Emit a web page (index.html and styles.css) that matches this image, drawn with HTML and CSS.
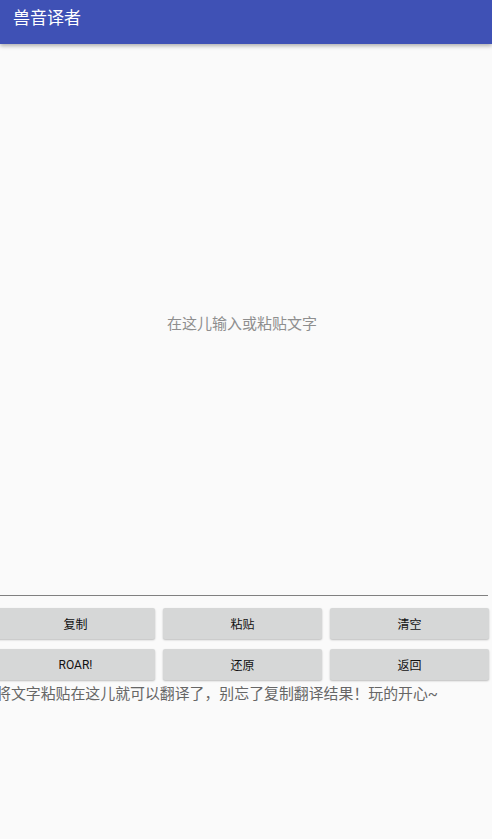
FILE: index.html
```html
<!DOCTYPE html>
<html lang="zh-CN">
<head>
  <meta charset="UTF-8">
  <meta name="viewport" content="width=device-width, initial-scale=1.0">
  <title>兽音译者</title>
  <link rel="stylesheet" href="styles.css">
</head>
<body>
    <div class="toolbar">兽音译者</div>
    <div class="main">
        <div class="inputBox">
            <span class="hint">在这儿输入或粘贴文字</span>
        </div>
        <div class="buttons">
            <div class="btn">复制</div>
            <div class="btn">粘贴</div>
            <div class="btn">清空</div>
            <div class="btn">ROAR!</div>
            <div class="btn">还原</div>
            <div class="btn">返回</div>
        </div>
        <div class="tip">将文字粘贴在这儿就可以翻译了，别忘了复制翻译结果！玩的开心~</div>
    </div>
</body>
</html>
```

FILE: styles.css
```css
body {
    font-family: Roboto, "Noto Sans CJK SC", sans-serif;
    margin: 0;
    background: #fafafa;
    width: 492px;
    height: 839px;
    overflow: hidden;
}
.toolbar {
    height: 44px;
    background: #3f51b5;
    color: #fff;
    font-size: 17px;
    line-height: 37px;
    padding-left: 13px;
    box-shadow: 0 2px 4px rgba(0, 0, 0, 0.3);
    position: relative;
    z-index: 2;
}
.main {
    margin-left: -4px;
    width: 492px;
}
.inputBox {
    height: 550px;
    border-bottom: 1px solid #808080;
    display: flex;
    align-items: center;
    justify-content: center;
    margin-left: 4px;
    padding-top: 1px;
}
.hint {
    color: #8e8e8e;
    font-size: 15px;
    margin-left: -4px;
    margin-top: 4px;
}
.buttons {
    display: grid;
    grid-template-columns: 159px 159px 159px;
    column-gap: 8px;
    row-gap: 10px;
    padding-top: 12px;
}
.btn {
    height: 31px;
    background: #d6d7d7;
    border-radius: 2px;
    box-shadow: 0 1px 2px rgba(0, 0, 0, 0.25);
    font-size: 12px;
    color: #111;
    display: flex;
    align-items: center;
    justify-content: center;
}
.tip {
    color: #666;
    font-size: 14.9px;
    line-height: 20px;
    padding-top: 4px;
    white-space: nowrap;
}
```
